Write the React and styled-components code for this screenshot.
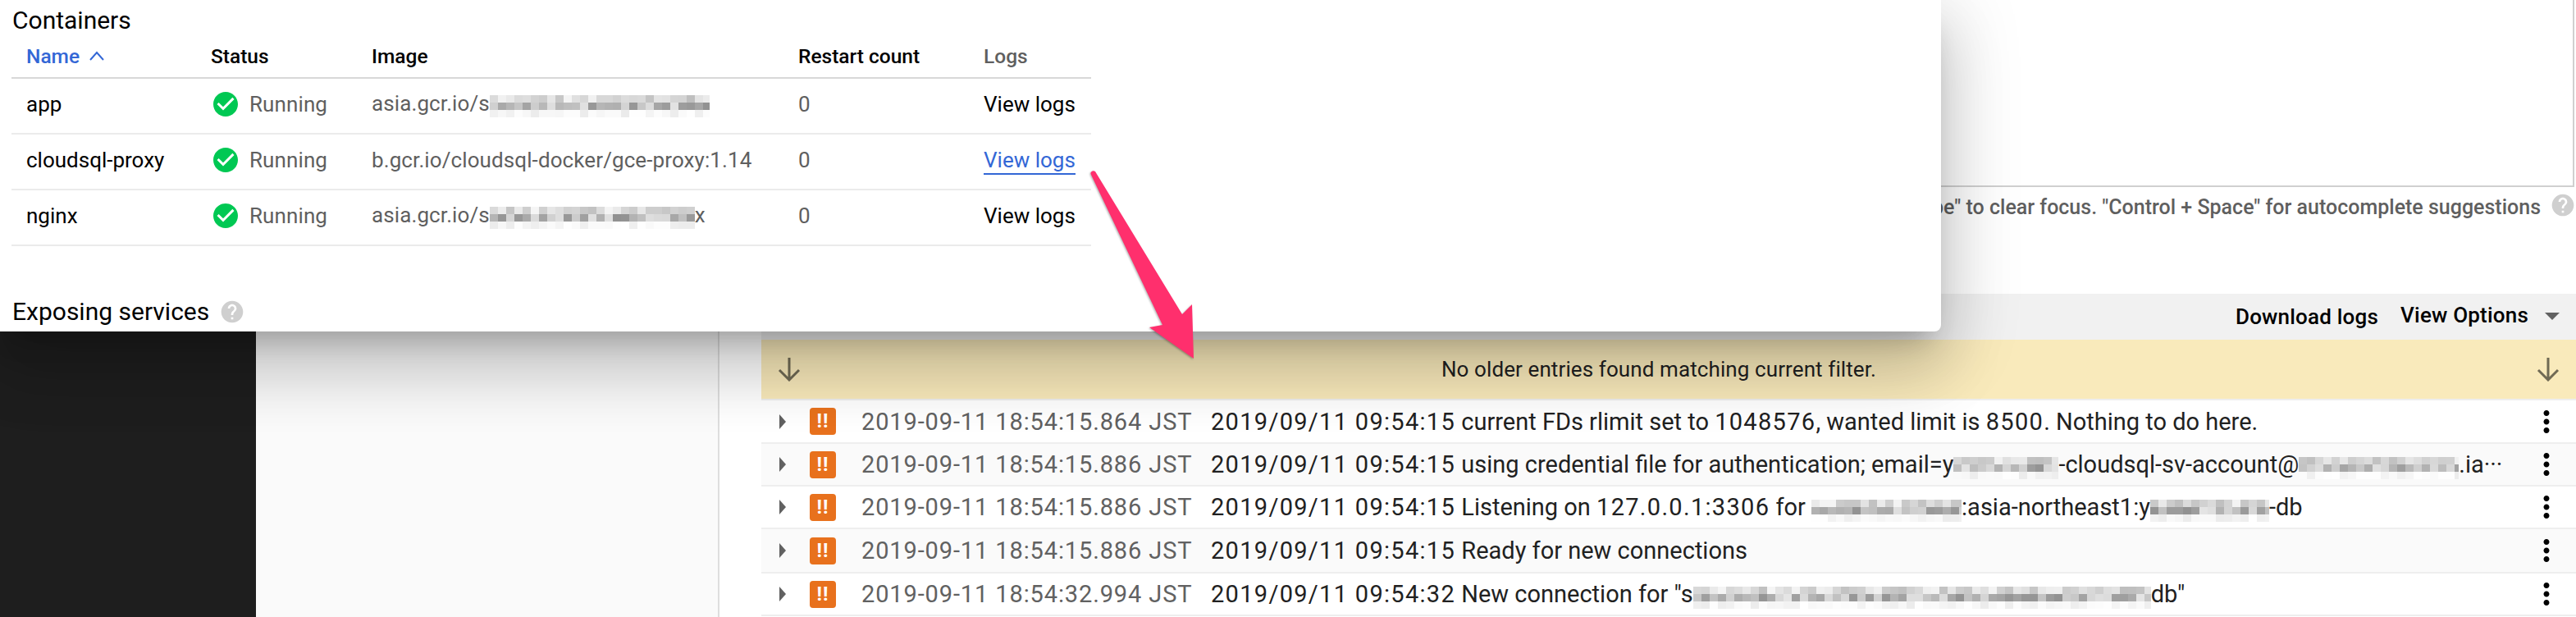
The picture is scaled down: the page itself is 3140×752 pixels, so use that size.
import React from 'react';
import styled, { createGlobalStyle, css } from 'styled-components';

const GlobalStyle = createGlobalStyle`
  html, body {
    margin: 0;
    padding: 0;
    background: #fff;
    font-family: Roboto, "Noto Sans", sans-serif;
  }
`;

const Page = styled.div`
  position: relative;
  width: 3140px;
  height: 752px;
  overflow: hidden;
  display: grid;
  grid-template-columns: 312px 565px 1fr;
  background: #fff;
`;

const Sidebar = styled.div`
  background: #1e1e1e;
`;

const MiddlePanel = styled.div`
  background: #fafafa;
  border-right: 2px solid #dedede;
  width: 563px;
`;

const LogColumn = styled.div`
  display: flex;
  flex-direction: column;
  min-width: 0;
`;

const EditorBox = styled.div`
  height: 226px;
  margin-left: 51px;
  margin-right: 2px;
  border: 2px solid #d0d0d0;
  border-top: 0;
  background: #fff;
`;

const Hint = styled.div`
  height: 130px;
  display: flex;
  justify-content: flex-end;
  align-items: flex-start;
  gap: 11px;
  padding-top: 6px;
  box-sizing: border-box;
  font-size: 25px;
  line-height: 38px;
  font-weight: 500;
  color: #5f5f5f;
  white-space: nowrap;
`;

const Toolbar = styled.div`
  height: 56px;
  margin-left: 51px;
  background: #f1f1f1;
  display: flex;
  justify-content: flex-end;
  align-items: center;
  font-size: 26px;
  font-weight: 500;
  letter-spacing: 0.2px;
  color: #000;
  padding-right: 20px;
`;

const DownloadLink = styled.span`
  margin-right: 27px;
`;

const ViewOptions = styled.span`
  margin-bottom: 4px;
  margin-right: 20px;
`;

const Caret = styled.span`
  width: 0;
  height: 0;
  border-left: 9px solid transparent;
  border-right: 9px solid transparent;
  border-top: 9px solid #616161;
  margin-bottom: 2px;
`;

const Banner = styled.div`
  height: 72px;
  margin-left: 51px;
  background: #f9eabb;
  border-bottom: 2px solid #eeeeee;
  box-sizing: content-box;
  display: flex;
  align-items: center;
  justify-content: space-between;
  padding: 0 20px 0 20px;
  font-size: 26px;
  letter-spacing: 0.1px;
  color: #212121;
`;

const BannerText = styled.span`
  margin-right: 24px;
`;

const LogRow = styled.div`
  height: ${p => p.$h}px;
  margin-left: 51px;
  box-sizing: border-box;
  border-bottom: 2px solid #eeeeee;
  background: ${p => (p.$alt ? '#fafafa' : '#fff')};
  display: grid;
  grid-template-columns: 59px 63px 426px 1fr 57px;
  align-items: center;
  font-size: 29px;
  white-space: nowrap;
`;

const Expander = styled.span`
  width: 0;
  height: 0;
  margin-left: 22px;
  border-top: 9px solid transparent;
  border-bottom: 9px solid transparent;
  border-left: 8px solid #616161;
`;

const Severity = styled.span`
  width: 32px;
  height: 33px;
  border-radius: 4px;
  background: #e8711d;
  color: #fff;
  font-size: 24px;
  font-weight: 700;
  line-height: 32px;
  text-align: center;
  letter-spacing: 1px;
`;

const Stamp = styled.span`
  color: #616161;
  letter-spacing: 0.88px;
`;

const Message = styled.span`
  color: #212121;
  overflow: hidden;
`;

// digits run wider than the words around them in the source
const Digits = styled.span`
  letter-spacing: 1.3px;
`;

const Kebab = styled.svg`
  width: 42px;
  height: 42px;
  fill: #000;
`;

const Modal = styled.div`
  position: absolute;
  top: 0;
  left: 0;
  width: 2366px;
  height: 404px;
  background: #fff;
  border-radius: 0 0 8px 0;
  box-shadow: 0 48px 76px 6px rgba(0, 0, 0, 0.14),
    0 18px 92px 16px rgba(0, 0, 0, 0.12),
    0 22px 30px -14px rgba(0, 0, 0, 0.2);
`;

const SectionTitle = styled.div`
  height: 50px;
  padding-left: 15px;
  font-size: 30px;
  line-height: 50px;
  color: #000;
  display: flex;
  align-items: center;
  gap: 12px;
  ${p => p.$spaced && css`margin-top: 55px;`}
`;

const tableCols = css`
  display: grid;
  grid-template-columns: 243px 196px 520px 226px 131px;
  width: 1316px;
  margin-left: 14px;
  box-sizing: border-box;
  font-size: 26px;
  white-space: nowrap;
`;

const TableHead = styled.div`
  ${tableCols}
  height: 46px;
  padding-bottom: 8px;
  align-items: center;
  font-size: 24.5px;
  font-weight: 500;
  color: #000;
  border-bottom: 2px solid #d8d8d8;
`;

const TableRow = styled.div`
  ${tableCols}
  height: 68px;
  padding-bottom: 4px;
  align-items: center;
  border-bottom: 2px solid #ebebeb;
`;

const NameHead = styled.span`
  padding-left: 18px;
  color: #3367d6;
  display: flex;
  align-items: center;
  gap: 12px;
`;

const LogsHead = styled.span`
  color: #5f5f5f;
`;

const NameCell = styled.span`
  padding-left: 18px;
  color: #000;
`;

const GreyCell = styled.span`
  color: #5f5f5f;
  letter-spacing: 0.1px;
`;

const StatusCell = styled(GreyCell)`
  display: flex;
  align-items: center;
  gap: 11px;
`;

const LogLink = styled.span`
  justify-self: start;
  color: ${p => (p.$active ? '#3367d6' : '#000')};
  border-bottom: 2px solid ${p => (p.$active ? '#3367d6' : 'transparent')};
  line-height: 32px;
  margin-top: 2px;
`;

const HelpSvg = styled.svg`
  width: 32px;
  height: 32px;
  fill: #cfcfcf;
  flex: none;
`;

const CheckSvg = styled.svg`
  width: 36px;
  height: 36px;
  fill: #00c853;
  flex: none;
`;

const Arrow = styled.svg`
  position: absolute;
  left: 0;
  top: 0;
  width: 3140px;
  height: 752px;
  pointer-events: none;
  filter: drop-shadow(-1px 1px 1px rgba(0, 0, 0, 0.3));
`;

const MosaicSvg = styled.svg`
  display: inline-block;
  vertical-align: -8px;
`;

// the redacted bits of the screenshot, 10px cells like the source blur
const Mosaic = ({ w }) => {
  const cells = [];
  let seed = w * 7 + 13;
  const next = () => {
    seed = (seed * 9301 + 49297) % 233280;
    return seed / 233280;
  };
  const cols = Math.ceil(w / 10);
  for (let x = 0; x < cols; x++) {
    [0, 1, 2].forEach(y => {
      const r = next();
      const lum = y === 1 ? 145 + r * 85 : y === 0 ? 190 + r * 55 : 235 + r * 20;
      const v = Math.round(lum);
      cells.push(<rect key={`${x}-${y}`} x={x * 10} y={y * 9} width="10" height="9" fill={`rgb(${v},${v},${v})`} />);
    });
  }
  return (
    <MosaicSvg width={w} height="27" viewBox={`0 0 ${w} 27`}>
      {cells}
    </MosaicSvg>
  );
};

const HelpIcon = () => (
  <HelpSvg viewBox="0 0 24 24">
    <path d="M12 2C6.48 2 2 6.48 2 12s4.48 10 10 10 10-4.48 10-10S17.52 2 12 2zm1 17h-2v-2h2v2zm2.07-7.75l-.9.92C13.45 12.9 13 13.5 13 15h-2v-.5c0-1.1.45-2.1 1.17-2.83l1.24-1.26c.37-.36.59-.86.59-1.41 0-1.1-.9-2-2-2s-2 .9-2 2H8c0-2.21 1.79-4 4-4s4 1.79 4 4c0 .88-.36 1.68-.93 2.25z" />
  </HelpSvg>
);

const CheckIcon = () => (
  <CheckSvg viewBox="0 0 24 24">
    <path d="M12 2C6.48 2 2 6.48 2 12s4.48 10 10 10 10-4.48 10-10S17.52 2 12 2zm-2 15l-5-5 1.41-1.41L10 14.17l7.59-7.59L19 8l-9 9z" />
  </CheckSvg>
);

const DownArrow = () => (
  <svg width="28" height="30" viewBox="0 0 28 30" fill="none" stroke="#000" strokeOpacity="0.55" strokeWidth="3">
    <path d="M14 1v27M2 16l12 12 12-12" />
  </svg>
);

const Chevron = () => (
  <svg width="18" height="12" viewBox="0 0 18 12" fill="none" stroke="#3367d6" strokeWidth="2">
    <path d="M1 11l8-9 8 9" />
  </svg>
);

const containers = [
  { name: 'app', image: <>asia.gcr.io/s<Mosaic w={268} /></> },
  { name: 'cloudsql-proxy', image: 'b.gcr.io/cloudsql-docker/gce-proxy:1.14', active: true },
  { name: 'nginx', image: <>asia.gcr.io/s<Mosaic w={250} />x</> },
];

const logs = [
  { h: 53, time: '2019-09-11 18:54:15.864 JST', at: '2019/09/11 09:54:15', msg: <>current FDs rlimit set to <Digits>1048576</Digits>, wanted limit is <Digits>8500</Digits>. Nothing to do here.</> },
  { h: 52, alt: true, time: '2019-09-11 18:54:15.886 JST', at: '2019/09/11 09:54:15', msg: <>using credential file for authentication; email=y<Mosaic w={128} />-cloudsql-sv-account@<Mosaic w={195} />.ia···</> },
  { h: 52, time: '2019-09-11 18:54:15.886 JST', at: '2019/09/11 09:54:15', msg: <>Listening on <Digits>127.0.0.1:3306</Digits> for <Mosaic w={183} />:asia-northeast1:y<Mosaic w={145} />-db</> },
  { h: 54, alt: true, time: '2019-09-11 18:54:15.886 JST', at: '2019/09/11 09:54:15', msg: 'Ready for new connections' },
  { h: 52, time: '2019-09-11 18:54:32.994 JST', at: '2019/09/11 09:54:32', msg: <>New connection for "s<Mosaic w={558} />db"</> },
];

const App = () => (
  <>
    <GlobalStyle />
    <Page>
      <Sidebar />
      <MiddlePanel />
      <LogColumn>
        <EditorBox />
        <Hint>
          Press "Escape" to clear focus. "Control + Space" for autocomplete suggestions
          <HelpIcon />
        </Hint>
        <Toolbar>
          <DownloadLink>Download logs</DownloadLink>
          <ViewOptions>View Options</ViewOptions>
          <Caret />
        </Toolbar>
        <Banner>
          <DownArrow />
          <BannerText>No older entries found matching current filter.</BannerText>
          <DownArrow />
        </Banner>
        {logs.map((l, i) => (
          <LogRow key={i} $h={l.h} $alt={l.alt}>
            <Expander />
            <Severity>!!</Severity>
            <Stamp>{l.time}</Stamp>
            <Message><Digits>{l.at}</Digits> {l.msg}</Message>
            <Kebab viewBox="0 0 24 24">
              <path d="M12 8c1.1 0 2-.9 2-2s-.9-2-2-2-2 .9-2 2 .9 2 2 2zm0 2c-1.1 0-2 .9-2 2s.9 2 2 2 2-.9 2-2-.9-2-2-2zm0 6c-1.1 0-2 .9-2 2s.9 2 2 2 2-.9 2-2-.9-2-2-2z" />
            </Kebab>
          </LogRow>
        ))}
      </LogColumn>

      <Modal>
        <SectionTitle>Containers</SectionTitle>
        <TableHead>
          <NameHead>Name <Chevron /></NameHead>
          <span>Status</span>
          <span>Image</span>
          <span>Restart count</span>
          <LogsHead>Logs</LogsHead>
        </TableHead>
        {containers.map(c => (
          <TableRow key={c.name}>
            <NameCell>{c.name}</NameCell>
            <StatusCell><CheckIcon />Running</StatusCell>
            <GreyCell>{c.image}</GreyCell>
            <GreyCell>0</GreyCell>
            <LogLink $active={c.active}>View logs</LogLink>
          </TableRow>
        ))}
        <SectionTitle $spaced>Exposing services <HelpIcon /></SectionTitle>
      </Modal>

      <Arrow viewBox="0 0 3140 752">
        <path
          d="M1330 213c-2-3 2-6 5-4L1441 383l12-12 2 66-54-38 16-3z"
          fill="#ff2f6d"
        />
      </Arrow>
    </Page>
  </>
);

export default App;
